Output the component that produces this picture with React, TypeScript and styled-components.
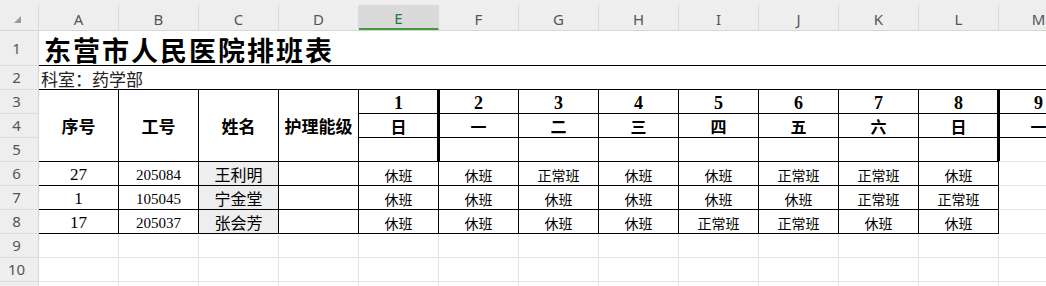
import styled, { createGlobalStyle, css } from 'styled-components';

const INK = '#000';
const GRID = '#e2e2e2';

const GlobalStyle = createGlobalStyle`
  *, *::before, *::after { box-sizing: border-box; }
  html, body { margin: 0; padding: 0; background: #fff; }
  body { width: 1046px; height: 286px; overflow: hidden; }
`;

const Sheet = styled.div`
  width: 1046px;
  height: 286px;
  overflow: hidden;
  background: #fff;
  font-family: "Noto Sans CJK SC", sans-serif;
`;

// column letters bar (A, B, C ...)
const ColumnBar = styled.div`
  display: flex;
  height: 31px;
  padding-top: 5px;
  background: #eeeeee;
  border-bottom: 1px solid #d6d6d6;
`;

const Corner = styled.div`
  flex: 0 0 39px;
  display: flex;
  align-items: center;
  padding: 4px 0 0 14px;
  border-right: 1px solid #dadada;
`;

const ColHead = styled.div<{ $active?: boolean }>`
  flex: 0 0 80px;
  display: flex;
  align-items: center;
  justify-content: center;
  padding-top: 2px;
  border-right: 1px solid #dadada;
  font: 15px "Noto Sans", sans-serif;
  color: #555;

  ${(p) =>
    p.$active &&
    css`
      background: #dadada;
      color: #1f7a4d;
      border-bottom: 2px solid #3f9b36;
    `}
`;

const Grid = styled.div`
  display: grid;
  grid-template-columns: 39px repeat(13, 80px);
  grid-template-rows: 35px repeat(10, 24px);
`;

const RowHead = styled.div`
  display: flex;
  align-items: center;
  justify-content: center;
  padding-right: 5px;
  background: #eeeeee;
  border-right: 1px solid #d6d6d6;
  border-bottom: 1px solid #dcdcdc;
  font: 15px/1 "Noto Sans", sans-serif;
  color: #555;
`;

type CellProps = {
  $right?: string;
  $bottom?: string;
  $heavy?: 'left' | 'right';
  $shade?: boolean;
  $wide?: boolean;
  $tall?: boolean;
  $start?: boolean;
};

const Cell = styled.div<CellProps>`
  display: flex;
  align-items: center;
  justify-content: ${(p) => (p.$start ? 'flex-start' : 'center')};
  min-width: 0;
  white-space: nowrap;
  color: #000;
  background: ${(p) => (p.$shade ? '#eeeeee' : '#fff')};
  border-right: 1px solid ${(p) => p.$right ?? GRID};
  border-bottom: 1px solid ${(p) => p.$bottom ?? GRID};
  ${(p) => p.$wide && 'grid-column: 2 / -1;'}
  ${(p) => p.$tall && 'grid-row: span 3;'}
  ${(p) => p.$heavy === 'left' && `box-shadow: inset 1px 0 0 ${INK};`}
  ${(p) => p.$heavy === 'right' && `box-shadow: inset -1px 0 0 ${INK};`}
`;

const Title = styled.span`
  padding: 3px 0 0 5px;
  font-size: 27px;
  font-weight: 700;
  line-height: 28px;
  letter-spacing: 2px;
`;

const Dept = styled.span`
  padding: 2px 0 0 2px;
  font-size: 17px;
  line-height: 20px;
  color: #222;
`;

const HeadLabel = styled.span`
  font-size: 17px;
  font-weight: 700;
  line-height: 20px;
`;

const DayNum = styled.span`
  padding-top: 2px;
  font: 700 18px/20px "Liberation Serif", "Noto Sans CJK SC", serif;
`;

const DayName = styled.span`
  padding-top: 1px;
  font-size: 16px;
  font-weight: 700;
  line-height: 20px;
`;

const SeqNo = styled.span`
  padding-top: 2px;
  font: 17px/20px "Liberation Serif", serif;
`;

const StaffId = styled.span`
  padding-top: 2px;
  font: 15px/20px "Liberation Serif", serif;
`;

const Name = styled.span`
  padding-top: 1px;
  font-size: 16px;
  line-height: 20px;
`;

const Shift = styled.span`
  padding-top: 2px;
  font-size: 14px;
  line-height: 20px;
`;

const letters = ['A', 'B', 'C', 'D', 'E', 'F', 'G', 'H', 'I', 'J', 'K', 'L', 'M'];

const days = [
  { n: '1', w: '日' },
  { n: '2', w: '一' },
  { n: '3', w: '二' },
  { n: '4', w: '三' },
  { n: '5', w: '四' },
  { n: '6', w: '五' },
  { n: '7', w: '六' },
  { n: '8', w: '日' },
];
const nextDay = { n: '9', w: '一' };

const staff = [
  { no: '27', id: '205084', name: '王利明', shifts: ['休班', '休班', '正常班', '休班', '休班', '正常班', '正常班', '休班'] },
  { no: '1', id: '105045', name: '宁金堂', shifts: ['休班', '休班', '休班', '休班', '休班', '休班', '正常班', '正常班'] },
  { no: '17', id: '205037', name: '张会芳', shifts: ['休班', '休班', '休班', '休班', '正常班', '正常班', '休班', '休班'] },
];

// week boundaries get the heavy rule (after day 1 and after day 8)
const heavyFor = (i: number): 'left' | 'right' | undefined => {
  if (i === 0 || i === 7) return 'right';
  if (i === 1) return 'left';
  return undefined;
};

type Person = (typeof staff)[number];

const Row = ({ index, person }: { index: number; person: Person }) => (
  <>
    <RowHead>{index}</RowHead>
    <Cell $right={INK} $bottom={INK}>
      <SeqNo>{person.no}</SeqNo>
    </Cell>
    <Cell $right={INK} $bottom={INK}>
      <StaffId>{person.id}</StaffId>
    </Cell>
    <Cell $right={INK} $bottom={INK} $shade>
      <Name>{person.name}</Name>
    </Cell>
    <Cell $right={INK} $bottom={INK} />
    {person.shifts.map((sh, i) => (
      <Cell key={i} $right={INK} $bottom={INK}>
        <Shift>{sh}</Shift>
      </Cell>
    ))}
    <Cell />
  </>
);

const EmptyRow = ({ index }: { index: number }) => (
  <>
    <RowHead>{index}</RowHead>
    {letters.map((l) => (
      <Cell key={l} />
    ))}
  </>
);

const App = () => {
  return (
    <>
      <GlobalStyle />
      <Sheet>
        <ColumnBar>
          <Corner>
            <svg width="7" height="7" viewBox="0 0 7 7">
              <polygon points="7,0 7,7 0,7" fill="#9a9a9a" />
            </svg>
          </Corner>
          {letters.map((l) => (
            <ColHead key={l} $active={l === 'E'}>
              {l}
            </ColHead>
          ))}
        </ColumnBar>

        <Grid>
          <RowHead>1</RowHead>
          <Cell $wide $start $bottom={INK}>
            <Title>东营市人民医院排班表</Title>
          </Cell>

          <RowHead>2</RowHead>
          <Cell $wide $start $bottom={INK}>
            <Dept>科室：药学部</Dept>
          </Cell>

          <RowHead>3</RowHead>
          {['序号', '工号', '姓名', '护理能级'].map((h) => (
            <Cell key={h} $tall $right={INK} $bottom={INK}>
              <HeadLabel>{h}</HeadLabel>
            </Cell>
          ))}
          {days.map((d, i) => (
            <Cell key={d.n} $right={INK} $bottom={INK} $heavy={heavyFor(i)}>
              <DayNum>{d.n}</DayNum>
            </Cell>
          ))}
          <Cell $bottom={INK} $heavy="left">
            <DayNum>{nextDay.n}</DayNum>
          </Cell>

          <RowHead>4</RowHead>
          {days.map((d, i) => (
            <Cell key={d.n} $right={INK} $bottom={INK} $heavy={heavyFor(i)}>
              <DayName>{d.w}</DayName>
            </Cell>
          ))}
          <Cell $bottom={INK} $heavy="left">
            <DayName>{nextDay.w}</DayName>
          </Cell>

          <RowHead>5</RowHead>
          {days.map((d, i) => (
            <Cell key={d.n} $right={INK} $bottom={INK} $heavy={heavyFor(i)} />
          ))}
          <Cell $heavy="left" />

          {staff.map((s, r) => (
            <Row key={s.id} index={r + 6} person={s} />
          ))}

          {[9, 10, 11].map((n) => (
            <EmptyRow key={n} index={n} />
          ))}
        </Grid>
      </Sheet>
    </>
  );
};

export default App;
